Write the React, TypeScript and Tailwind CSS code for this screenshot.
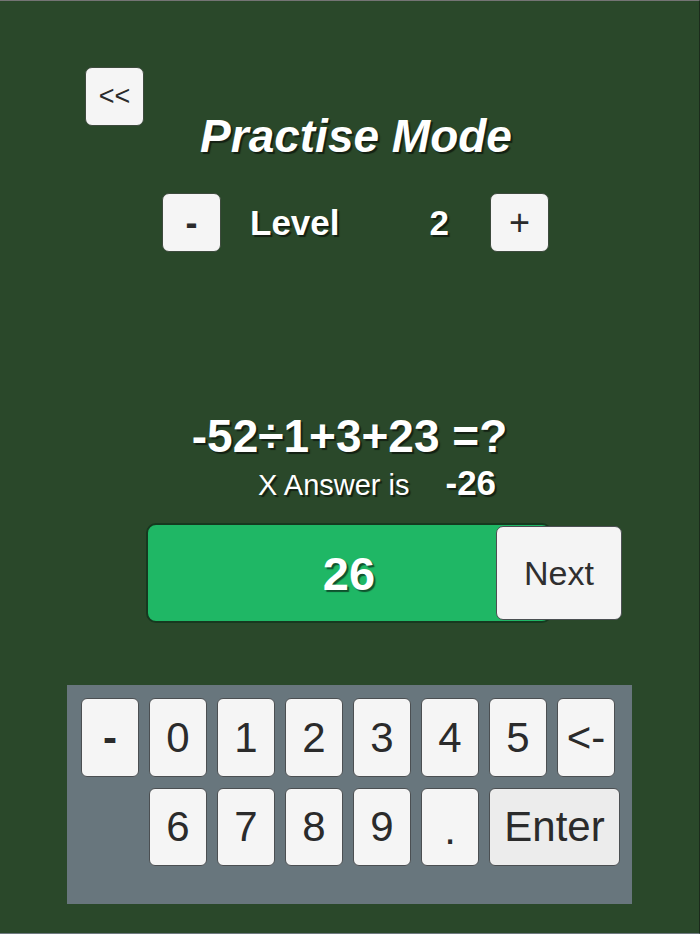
import React from "react";

const font = { fontFamily: '"Liberation Sans", Arial, sans-serif' };

const shadow = "[text-shadow:2px_2px_1px_rgba(0,0,0,0.55)]";

const Key: React.FC<{ label: string; wide?: boolean; bold?: boolean; dot?: boolean }> = ({
  label,
  wide,
  bold,
  dot,
}) => (
  <button
    className={`flex h-full items-center justify-center rounded-[6px] border border-[#4b4f52] text-[42px] leading-none text-[#2b2b2b] ${
      wide ? "w-[131px] bg-[#ececec]" : "w-[58px] bg-[#f5f5f5]"
    } ${bold ? "font-bold" : "font-normal"} ${dot ? "items-end pb-[14px]" : ""}`}
  >
    {label}
  </button>
);

export default function App() {
  const row1 = ["-", "0", "1", "2", "3", "4", "5", "<-"];
  const row2 = ["6", "7", "8", "9", "."];

  return (
    <div
      style={font}
      className="flex h-[934px] w-[700px] flex-col overflow-hidden border-t border-b border-r border-t-[#747474] border-b-[#6f7a80] border-r-[#1c2a1c] bg-[#2a482a]"
    >
      {/* back */}
      <button className="ml-[85px] mt-[66px] flex h-[59px] w-[59px] items-center justify-center rounded-[7px] border border-[#3d4a3d] bg-[#f5f5f5] text-[27px] leading-none text-[#2b2b2b]">
        &lt;&lt;
      </button>

      <h1 className={`-mt-[13px] pl-[13px] text-center text-[46px] font-bold italic leading-none text-white ${shadow}`}>
        Practise Mode
      </h1>

      {/* level */}
      <div className="mt-[34px] flex h-[59px] items-center">
        <button className="ml-[162px] flex h-[59px] w-[59px] items-center justify-center rounded-[7px] border border-[#3d4a3d] bg-[#f5f5f5] text-[36px] font-bold leading-none text-[#2b2b2b]">
          -
        </button>
        <span className={`ml-[29px] text-[35px] font-bold leading-none text-white ${shadow}`}>Level</span>
        <span className={`ml-[90px] text-[35px] font-bold leading-none text-white ${shadow}`}>2</span>
        <button className="ml-[41px] flex h-[59px] w-[59px] items-center justify-center rounded-[7px] border border-[#3d4a3d] bg-[#f5f5f5] text-[36px] leading-none text-[#2b2b2b]">
          +
        </button>
      </div>

      {/* question */}
      <div className={`mt-[161px] text-center text-[46px] font-bold leading-none text-white ${shadow}`}>
        -52÷1+3+23 =?
      </div>

      <div className="mt-[7px] ml-[258px] flex items-baseline gap-[36px] leading-[34px]">
        <span className={`text-[29px] text-white ${shadow}`}>X Answer is</span>
        <span className={`text-[35px] font-bold text-white ${shadow}`}>-26</span>
      </div>

      {/* answer bar */}
      <div className="mt-[21px] ml-[146px] flex h-[100px] items-center">
        <div
          className={`flex h-[100px] w-[406px] items-center justify-center rounded-[10px] border-2 border-[#16391f] bg-[#1fb765] text-[47px] font-bold leading-none text-white ${shadow}`}
        >
          26
        </div>
        <button className="-ml-[56px] flex h-[94px] w-[126px] items-center justify-center rounded-[7px] border border-[#4b4f52] bg-[#f4f4f4] text-[34px] leading-none text-[#2f2f2f]">
          Next
        </button>
      </div>

      {/* keypad */}
      <div className="mt-[62px] ml-[67px] flex h-[219px] w-[565px] flex-col bg-[#68767d] pl-[14px] pt-[13px]">
        <div className="flex h-[79px] gap-[10px]">
          {row1.map((k) => (
            <Key key={k} label={k} bold={k === "-"} />
          ))}
        </div>
        <div className="mt-[11px] flex h-[78px] gap-[10px] pl-[68px]">
          {row2.map((k) => (
            <Key key={k} label={k} dot={k === "."} />
          ))}
          <Key label="Enter" wide />
        </div>
      </div>
    </div>
  );
}
